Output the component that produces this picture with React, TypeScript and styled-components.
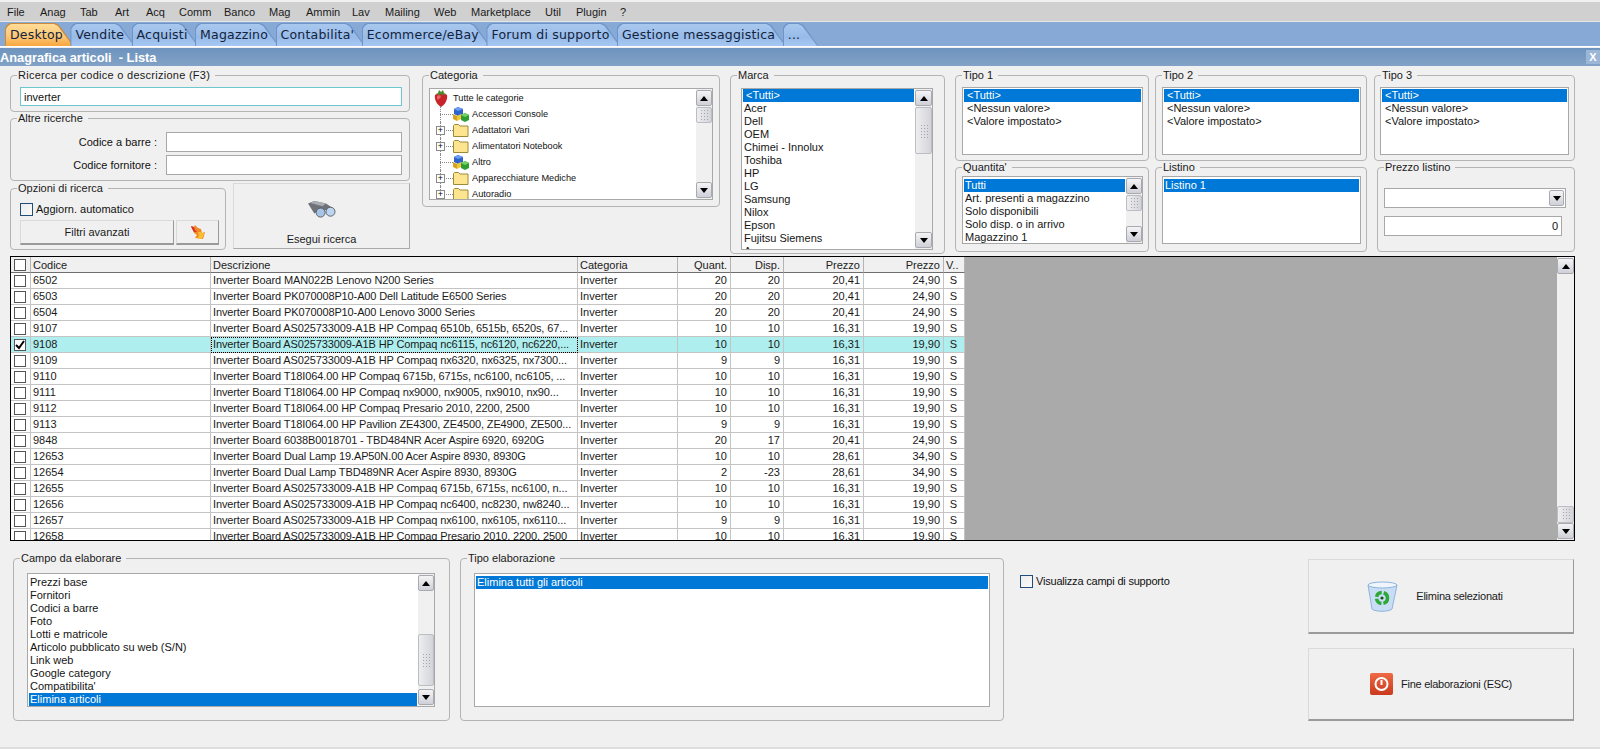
import React from 'react';
import styled, { createGlobalStyle } from 'styled-components';

const GlobalStyle = createGlobalStyle`
  html, body {
    margin: 0;
    padding: 0;
    height: 100%;
    overflow: hidden;
    background: #f0f0f0;
  }
  body {
    font-family: "Liberation Sans", Arial, sans-serif;
    font-size: 11px;
    color: #111;
  }
`;

const Page = styled.div`
  width: 1600px;
  height: 749px;
  display: flex;
  flex-direction: column;
  overflow: hidden;
  padding-top: 2px;
  box-sizing: border-box;
  background: #f0f0f0;
`;

const MenuBar = styled.div`
  height: 19px;
  padding-left: 2px;
  display: flex;
  align-items: center;
  background: #d0d0d0;
  border-bottom: 1px solid #e6e6e6;
`;

const MenuItem = styled.span<{ $w: number }>`
  width: ${({ $w }) => $w}px;
  padding-left: 5px;
  box-sizing: border-box;
  color: #1a1a1a;
`;

const TabStrip = styled.div`
  height: 25px;
  padding: 1px 0 0 5px;
  box-sizing: border-box;
  display: flex;
  align-items: stretch;
  background: #86a9d6;
  border-bottom: 1px solid #fff;
`;

const tabShape =
  'polygon(0 100%, 0 5px, 2px 2px, 5px 0, calc(100% - 19px) 0, calc(100% - 15px) 2px, calc(100% - 12px) 6px, 100% 100%)';

const Tab = styled.div<{ $active?: boolean }>`
  position: relative;
  display: flex;
  align-items: center;
  padding: 0 11px 0 5px;
  margin-right: -3.5px;
  font-family: "DejaVu Sans", Verdana, sans-serif;
  font-size: 12.5px;
  letter-spacing: 0.2px;
  color: #14233c;
  background: ${({ $active }) => ($active ? '#c98a3a' : '#6f95c8')};
  clip-path: ${tabShape};

  &:last-child {
    padding-right: 18px;
  }

  &::before {
    content: '';
    position: absolute;
    inset: 1px 1px 0 1px;
    clip-path: ${tabShape};
    background: ${({ $active }) =>
      $active
        ? 'linear-gradient(#ffdc97, #fcc877 55%, #f8a63f)'
        : 'linear-gradient(#a9c8ee, #97bbe9 60%, #a6c7f2)'};
  }
`;

const TabLabel = styled.span`
  position: relative;
`;

const TitleBar = styled.div`
  height: 18px;
  margin-top: 1px;
  display: flex;
  align-items: center;
  justify-content: space-between;
  background: linear-gradient(#6d93be, #82a2c6);
  color: #fff;
  font-size: 12.8px;
  font-weight: 700;
  white-space: pre;
`;

const CloseBox = styled.div`
  width: 14px;
  height: 14px;
  display: flex;
  align-items: center;
  justify-content: center;
  background: #9bb6d6;
  color: #fff;
  font-size: 11px;
  font-weight: 700;
`;

const Content = styled.div`
  flex: 1;
  min-height: 0;
  padding: 3px 25px 0 10px;
  display: flex;
  flex-direction: column;
`;

const TopArea = styled.div`
  height: 187px;
  display: flex;
  align-items: flex-start;
`;

const LeftColumn = styled.div`
  width: 400px;
  margin-right: 12px;
  display: flex;
  flex-direction: column;
`;

const Group = styled.fieldset<{ $w?: number; $h: number; $top: number; $right: number; $left: number }>`
  --inset: ${({ $left }) => $left}px;
  margin: 0;
  min-width: 0;
  box-sizing: border-box;
  width: ${({ $w }) => ($w ? `${$w}px` : 'auto')};
  height: ${({ $h }) => $h}px;
  padding: ${({ $top, $right, $left }) => `${$top}px ${$right}px 0 ${$left}px`};
  border: 1px solid #b4b4b4;
  border-radius: 4px;
`;

const GroupTitle = styled.legend`
  margin-left: calc(6px - var(--inset));
  padding: 0 5px 0 1px;
  line-height: 12px;
  color: #1a1a1a;
`;

const WideGroupTitle = styled(GroupTitle)`
  letter-spacing: 0.27px;
`;

const TextBox = styled.div<{ $focus?: boolean; $w?: number; $right?: boolean }>`
  box-sizing: border-box;
  height: ${({ $focus }) => ($focus ? 19 : 20)}px;
  width: ${({ $w }) => ($w ? `${$w}px` : 'auto')};
  padding: 0 3px;
  display: flex;
  align-items: center;
  justify-content: ${({ $right }) => ($right ? 'flex-end' : 'flex-start')};
  background: #fff;
  border: 1px solid ${({ $focus }) => ($focus ? '#6cc8cc' : '#a8a8a8')};
`;

const FieldRow = styled.div`
  display: flex;
  align-items: center;
  justify-content: flex-end;
  gap: 9px;
  margin-bottom: 3px;
`;

const SearchRow = styled.div`
  margin-top: 1px;
  display: flex;
  align-items: flex-end;
  justify-content: space-between;
`;

const CheckLine = styled.label`
  display: flex;
  align-items: center;
  gap: 3px;
  height: 14px;
  line-height: 14px;
`;

const Check = styled.span`
  width: 13px;
  height: 13px;
  flex: none;
  box-sizing: border-box;
  display: flex;
  align-items: center;
  justify-content: center;
  border: 1px solid #1f4e79;
  background: linear-gradient(135deg, #ececec, #fafafa);
`;

const CellCheck = styled(Check)`
  width: 12px;
  height: 12px;
  margin: 0 auto;
  border-color: #555;
  background: #fff;
`;

const ButtonRow = styled.div`
  margin-top: 4px;
  display: flex;
  gap: 2px;
`;

const Button = styled.div<{ $w: number; $h: number; $column?: boolean; $gap?: number }>`
  box-sizing: border-box;
  width: ${({ $w }) => $w}px;
  height: ${({ $h }) => $h}px;
  display: flex;
  flex-direction: ${({ $column }) => ($column ? 'column' : 'row')};
  align-items: center;
  justify-content: center;
  gap: ${({ $gap }) => $gap ?? 0}px;
  background: #f0f0f0;
  border: 1px solid #dadada;
  border-right-color: #9a9a9a;
  border-bottom: 2px solid #9a9a9a;
  color: #1a1a1a;
`;

const SearchButton = styled(Button)`
  margin-bottom: 1px;
  padding-top: 16px;
  justify-content: flex-start;
  border-right-color: #aaa;
  border-bottom: 1px solid #aaa;
`;

const BigButton = styled(Button)<{ $shift: number }>`
  margin-right: 1px;
  padding-right: ${({ $shift }) => $shift}px;
  letter-spacing: -0.25px;
`;

const ListBox = styled.div<{ $w?: number; $h: number }>`
  box-sizing: border-box;
  width: ${({ $w }) => ($w ? `${$w}px` : 'auto')};
  height: ${({ $h }) => $h}px;
  display: flex;
  background: #fff;
  border: 1px solid #a8a8a8;
  overflow: hidden;
`;

const ListItems = styled.div<{ $top?: number }>`
  flex: 1;
  min-width: 0;
  padding: ${({ $top }) => $top ?? 1}px 1px 0;
  overflow: hidden;
`;

const ListItem = styled.div<{ $selected?: boolean; $indent?: number }>`
  height: 13px;
  line-height: 13px;
  padding-left: ${({ $indent }) => $indent ?? 1}px;
  white-space: nowrap;
  font-size: 11px;
  background: ${({ $selected }) => ($selected ? '#0078d7' : 'transparent')};
  color: ${({ $selected }) => ($selected ? '#fff' : '#151515')};
`;

const ScrollTrack = styled.div<{ $w?: number }>`
  width: ${({ $w }) => $w ?? 16}px;
  flex: none;
  padding: 1px 0;
  box-sizing: border-box;
  display: flex;
  flex-direction: column;
  background: #f0f0f0;
`;

const ScrollButton = styled.div`
  height: 16px;
  flex: none;
  box-sizing: border-box;
  display: flex;
  align-items: center;
  justify-content: center;
  background: linear-gradient(#f4f4f6, #cfd0d8);
  border: 1px solid #a9aab0;
  border-radius: 2px;
`;

const Arrow = styled.span<{ $down?: boolean }>`
  width: 0;
  height: 0;
  border-left: 4px solid transparent;
  border-right: 4px solid transparent;
  border-${({ $down }) => ($down ? 'top' : 'bottom')}: 5px solid #000;
`;

const ScrollMiddle = styled.div`
  flex: 1;
  min-height: 0;
`;

const ScrollThumb = styled.div<{ $top: number; $h: number }>`
  margin-top: ${({ $top }) => $top}px;
  height: ${({ $h }) => $h}px;
  box-sizing: border-box;
  display: flex;
  align-items: center;
  justify-content: center;
  background: linear-gradient(90deg, #eeeef0, #d3d4da);
  border: 1px solid #bcbdc3;
  border-radius: 2px;
`;

const Grip = styled.div`
  width: 8px;
  height: 14px;
  max-height: 90%;
  background-image: radial-gradient(#a5a6ac 35%, transparent 40%);
  background-size: 3px 3px;
`;

const TreeRow = styled.div`
  height: 16px;
  display: flex;
  align-items: center;
  font-size: 9.2px;
  white-space: nowrap;
`;

const RootIcon = styled.span`
  margin-left: 3px;
  margin-right: 5px;
  display: flex;
`;

const Connector = styled.span<{ $last?: boolean }>`
  position: relative;
  width: 20px;
  height: 16px;
  margin-left: 2px;
  flex: none;

  &::before {
    content: '';
    position: absolute;
    left: 7px;
    top: 0;
    bottom: ${({ $last }) => ($last ? '8px' : '0')};
    border-left: 1px dotted #888;
  }

  &::after {
    content: '';
    position: absolute;
    left: 7px;
    right: 0;
    top: 8px;
    border-top: 1px dotted #888;
  }
`;

const Plus = styled.span`
  position: absolute;
  left: 3px;
  top: 4px;
  z-index: 1;
  width: 9px;
  height: 9px;
  box-sizing: border-box;
  display: flex;
  align-items: center;
  justify-content: center;
  background: #fff;
  border: 1px solid #8a8a8a;
  font-size: 9px;
  line-height: 7px;
  color: #000;
`;

const TreeIcon = styled.span`
  width: 18px;
  flex: none;
  display: flex;
  margin-right: 1px;
`;

const RightBlock = styled.div`
  width: 620px;
  display: flex;
  flex-direction: column;
`;

const RightRow = styled.div<{ $gap: number }>`
  display: flex;
  gap: 6px;

  & > :last-child {
    margin-left: ${({ $gap }) => $gap}px;
  }
`;

const SelectBox = styled(TextBox)`
  padding: 0 1px 0 0;
  justify-content: flex-end;
  margin-bottom: 8px;
`;

const SelectArrow = styled(ScrollButton)`
  width: 15px;
  height: 16px;
`;

const GridFrame = styled.div`
  height: 285px;
  flex: none;
  box-sizing: border-box;
  display: flex;
  background: #aaaaaa;
  border: 1px solid #000;
  overflow: hidden;
`;

const GridArea = styled.div`
  flex: 1;
  min-width: 0;
  overflow: hidden;
`;

const Table = styled.table`
  width: 954px;
  table-layout: fixed;
  border-collapse: separate;
  border-spacing: 0;
  background: #fff;
`;

const HeadCell = styled.th<{ $right?: boolean }>`
  height: 16px;
  padding: 0 3px 0 2px;
  box-sizing: border-box;
  overflow: hidden;
  white-space: nowrap;
  font-weight: 400;
  text-align: ${({ $right }) => ($right ? 'right' : 'left')};
  background: #f0f0f0;
  border-right: 1px solid #b4b4b4;
  border-bottom: 1px solid #6e6e6e;
  color: #222;
`;

const Row = styled.tr<{ $selected?: boolean }>`
  background: ${({ $selected }) => ($selected ? '#aeeeee' : '#fff')};
`;

const Cell = styled.td<{ $right?: boolean; $center?: boolean }>`
  height: 16px;
  padding: 0 3px 0 2px;
  box-sizing: border-box;
  overflow: hidden;
  white-space: nowrap;
  line-height: 15px;
  text-align: ${({ $right, $center }) => ($right ? 'right' : $center ? 'center' : 'left')};
  border-right: 1px solid #c4c4c4;
  border-bottom: 1px solid #c4c4c4;
  color: #1a1a1a;
`;

const DescCell = styled(Cell)<{ $focus?: boolean }>`
  letter-spacing: -0.12px;
  outline: ${({ $focus }) => ($focus ? '1px dotted #000' : 'none')};
  outline-offset: -1px;
`;

const BottomArea = styled.div`
  flex: 1;
  min-height: 0;
  padding: 11px 0 0 3px;
  display: flex;
  align-items: flex-start;
`;

const SupportCheck = styled(CheckLine)`
  margin: 22px 0 0 16px;
  letter-spacing: -0.2px;
`;

const ActionColumn = styled.div`
  margin: 7px 0 0 auto;
  display: flex;
  flex-direction: column;
  gap: 14px;
`;

const GroupGap = styled.div`
  width: 10px;
  flex: none;
`;

const ColGap = styled.div<{ $w: number }>`
  width: ${({ $w }) => $w}px;
  flex: none;
`;

const FooterBand = styled.div`
  height: 2px;
  flex: none;
  background: #dddddd;
`;

const Strawberry = () => (
  <svg width="14" height="17" viewBox="0 0 14 17">
    <path d="M1 5c2-2 10-2 12 0 1 4-2 10-6 12C3 15 0 9 1 5z" fill="#c8252b" />
    <path d="M3 6c1-1 3-1 4 0-1 3-3 4-4 3z" fill="#e8656a" />
    <path d="M2 4l2-1 1-3 2 2 2-2 1 3 2 1-3 1-2-1-2 1z" fill="#4c8a2e" />
  </svg>
);

const Cubes = () => (
  <svg width="16" height="15" viewBox="0 0 16 15">
    <path d="M5 0l5 2v5l-5 2-4-2V2z" fill="#2f63c9" />
    <path d="M5 0l5 2-5 2-4-2z" fill="#6d9cf0" />
    <path d="M0 7l4 2v5l-4-2z" fill="#d9a21c" />
    <path d="M4 9l4-2v5l-4 2z" fill="#f0c63e" />
    <path d="M8 8l4-2 4 2v5l-4 2-4-2z" fill="#2f9e32" />
    <path d="M8 8l4-2 4 2-4 2z" fill="#74d266" />
  </svg>
);

const Folder = () => (
  <svg width="16" height="14" viewBox="0 0 16 14">
    <path d="M.5 13.5V2.5l1-1h4l1.5 1.5h8v10.5z" fill="#fde58f" stroke="#9c8a3a" />
  </svg>
);

const Binoculars = () => (
  <svg width="31" height="18" viewBox="0 0 32 20">
    <path d="M1 4l7-3 13 3 9 6-2 6-7-5-8 1-5 3z" fill="#6f7278" />
    <path d="M3 3l6-2 12 3-4 3z" fill="#a9acb2" />
    <circle cx="15" cy="14" r="5" fill="#a6c4e8" stroke="#55585e" />
    <circle cx="26" cy="13" r="5" fill="#bcd5f0" stroke="#55585e" />
  </svg>
);

const FlameArrow = () => (
  <svg width="16" height="16" viewBox="0 0 16 16">
    <path d="M1 2l3 1 1-2 3 3 3 1 1 4 3-1-2 7-8-1 2-3-3-2-1-3z" fill="#f08a24" />
    <path d="M1 2l3 1 1 3 2 2-3 0-2-3z" fill="#d8352a" />
    <path d="M8 8l3 0 1 1 2 0-2 6-5-1 2-2z" fill="#fcc02e" />
  </svg>
);

const RecycleBin = () => (
  <svg width="31" height="31" viewBox="0 0 31 31">
    <path d="M1 4l4 24c3 3 17 3 20 0L30 4z" fill="#c9def5" stroke="#8eb3dc" />
    <ellipse cx="15.5" cy="4" rx="14.5" ry="3" fill="#eef5fc" stroke="#8eb3dc" />
    <circle cx="15" cy="17" r="5.5" fill="none" stroke="#2fa83a" strokeWidth="3.5" strokeDasharray="7 2" />
    <circle cx="15" cy="17" r="1.6" fill="#14541c" />
  </svg>
);

const PowerIcon = () => (
  <svg width="23" height="22" viewBox="0 0 23 22">
    <defs>
      <linearGradient id="powerFill" x1="0" y1="0" x2="0" y2="1">
        <stop offset="0" stopColor="#ee6a44" />
        <stop offset="1" stopColor="#c93a1e" />
      </linearGradient>
    </defs>
    <rect x="0" y="0" width="23" height="22" rx="2" fill="url(#powerFill)" />
    <circle cx="11.5" cy="11" r="6" fill="none" stroke="#fff" strokeWidth="2" />
    <path d="M11.5 7v5" stroke="#fff" strokeWidth="2" />
  </svg>
);

const Tick = () => (
  <svg width="10" height="10" viewBox="0 0 10 10">
    <path d="M1 5l3 3 5-7" fill="none" stroke="#000" strokeWidth="2" />
  </svg>
);

const Scroll = ({ top, h, w }: { top: number; h: number; w?: number }) => (
  <ScrollTrack $w={w}>
    <ScrollButton><Arrow /></ScrollButton>
    <ScrollMiddle>
      <ScrollThumb $top={top} $h={h}>
        <Grip />
      </ScrollThumb>
    </ScrollMiddle>
    <ScrollButton><Arrow $down /></ScrollButton>
  </ScrollTrack>
);

const menus: [string, number][] = [
  ['File', 33], ['Anag', 40], ['Tab', 35], ['Art', 31], ['Acq', 33], ['Comm', 45], ['Banco', 45],
  ['Mag', 37], ['Ammin', 46], ['Lav', 33], ['Mailing', 49], ['Web', 37], ['Marketplace', 74],
  ['Util', 31], ['Plugin', 44], ['?', 20],
];

const tabs = ['Desktop', 'Vendite', 'Acquisti', 'Magazzino', "Contabilita'", 'Ecommerce/eBay', 'Forum di supporto', 'Gestione messaggistica', '...'];

const treeItems = [
  { label: 'Accessori Console', cubes: true },
  { label: 'Adattatori Vari' },
  { label: 'Alimentatori Notebook' },
  { label: 'Altro', cubes: true },
  { label: 'Apparecchiature Mediche' },
  { label: 'Autoradio' },
];

const brands = ['Acer', 'Dell', 'OEM', 'Chimei - Innolux', 'Toshiba', 'HP', 'LG', 'Samsung', 'Nilox', 'Epson', 'Fujitsu Siemens', 'Asus'];
const typeValues = ['<Tutti>', '<Nessun valore>', '<Valore impostato>'];
const quantities = ['Tutti', 'Art. presenti a magazzino', 'Solo disponibili', 'Solo disp. o in arrivo', 'Magazzino 1'];
const fields = ['Prezzi base', 'Fornitori', 'Codici a barre', 'Foto', 'Lotti e matricole', 'Articolo pubblicato su web (S/N)', 'Link web', 'Google category', "Compatibilita'", 'Elimina articoli'];

const AS = 'Inverter Board AS025733009-A1B HP Compaq ';
const T18 = 'Inverter Board T18I064.00 HP ';

const rows: [string, string, number, number, string, string][] = [
  ['6502', 'Inverter Board MAN022B Lenovo N200 Series', 20, 20, '20,41', '24,90'],
  ['6503', 'Inverter Board PK070008P10-A00 Dell Latitude E6500 Series', 20, 20, '20,41', '24,90'],
  ['6504', 'Inverter Board PK070008P10-A00 Lenovo 3000 Series', 20, 20, '20,41', '24,90'],
  ['9107', AS + '6510b, 6515b, 6520s, 67...', 10, 10, '16,31', '19,90'],
  ['9108', AS + 'nc6115, nc6120, nc6220,...', 10, 10, '16,31', '19,90'],
  ['9109', AS + 'nx6320, nx6325, nx7300...', 9, 9, '16,31', '19,90'],
  ['9110', T18 + 'Compaq 6715b, 6715s, nc6100, nc6105, ...', 10, 10, '16,31', '19,90'],
  ['9111', T18 + 'Compaq nx9000, nx9005, nx9010, nx90...', 10, 10, '16,31', '19,90'],
  ['9112', T18 + 'Compaq Presario 2010, 2200, 2500', 10, 10, '16,31', '19,90'],
  ['9113', T18 + 'Pavilion ZE4300, ZE4500, ZE4900, ZE500...', 9, 9, '16,31', '19,90'],
  ['9848', 'Inverter Board 6038B0018701 - TBD484NR Acer Aspire 6920, 6920G', 20, 17, '20,41', '24,90'],
  ['12653', 'Inverter Board Dual Lamp 19.AP50N.00 Acer Aspire 8930, 8930G', 10, 10, '28,61', '34,90'],
  ['12654', 'Inverter Board Dual Lamp TBD489NR Acer Aspire 8930, 8930G', 2, -23, '28,61', '34,90'],
  ['12655', AS + '6715b, 6715s, nc6100, n...', 10, 10, '16,31', '19,90'],
  ['12656', AS + 'nc6400, nc8230, nw8240...', 10, 10, '16,31', '19,90'],
  ['12657', AS + 'nx6100, nx6105, nx6110...', 9, 9, '16,31', '19,90'],
  ['12658', AS + 'Presario 2010, 2200, 2500', 10, 10, '16,31', '19,90'],
];

const colWidths = [20, 180, 367, 100, 53, 53, 80, 80, 21];

const SimpleList = ({ items, h }: { items: string[]; h: number }) => (
  <ListBox $h={h}>
    <ListItems>
      {items.map((item, i) => (
        <ListItem key={item} $selected={i === 0} $indent={3}>{item}</ListItem>
      ))}
    </ListItems>
  </ListBox>
);

export default function App() {
  return (
    <Page>
      <GlobalStyle />
      <MenuBar>
        {menus.map(([name, w]) => (
          <MenuItem key={name} $w={w}>{name}</MenuItem>
        ))}
      </MenuBar>
      <TabStrip>
        {tabs.map((tab, i) => (
          <Tab key={tab} $active={i === 0}>
            <TabLabel>{tab}</TabLabel>
          </Tab>
        ))}
      </TabStrip>
      <TitleBar>
        {'Anagrafica articoli  - Lista'}
        <CloseBox>X</CloseBox>
      </TitleBar>

      <Content>
        <TopArea>
          <LeftColumn>
            <Group $h={43} $top={6} $right={7} $left={9}>
              <WideGroupTitle>Ricerca per codice o descrizione (F3)</WideGroupTitle>
              <TextBox $focus>inverter</TextBox>
            </Group>
            <Group $h={69} $top={8} $right={7} $left={9}>
              <GroupTitle>Altre ricerche</GroupTitle>
              <FieldRow>
                Codice a barre :
                <TextBox $w={236} />
              </FieldRow>
              <FieldRow>
                Codice fornitore :
                <TextBox $w={236} />
              </FieldRow>
            </Group>
            <SearchRow>
              <Group $w={216} $h={68} $top={8} $right={6} $left={9}>
                <GroupTitle>Opzioni di ricerca</GroupTitle>
                <CheckLine>
                  <Check />
                  Aggiorn. automatico
                </CheckLine>
                <ButtonRow>
                  <Button $w={154} $h={25}>Filtri avanzati</Button>
                  <Button $w={43} $h={25}><FlameArrow /></Button>
                </ButtonRow>
              </Group>
              <SearchButton $w={177} $h={66} $column $gap={15}>
                <Binoculars />
                Esegui ricerca
              </SearchButton>
            </SearchRow>
          </LeftColumn>

          <Group $w={298} $h={138} $top={7} $right={6} $left={6}>
            <GroupTitle>Categoria</GroupTitle>
            <ListBox $h={112}>
              <ListItems>
                <TreeRow>
                  <RootIcon><Strawberry /></RootIcon>
                  Tutte le categorie
                </TreeRow>
                {treeItems.map((item, i) => (
                  <TreeRow key={item.label}>
                    <Connector $last={i === treeItems.length - 1}>
                      {!item.cubes && <Plus>+</Plus>}
                    </Connector>
                    <TreeIcon>{item.cubes ? <Cubes /> : <Folder />}</TreeIcon>
                    {item.label}
                  </TreeRow>
                ))}
              </ListItems>
              <Scroll top={1} h={16} />
            </ListBox>
          </Group>
          <ColGap $w={10} />

          <Group $w={215} $h={185} $top={7} $right={11} $left={10}>
            <GroupTitle>Marca</GroupTitle>
            <ListBox $h={162}>
              <ListItems $top={0}>
                <ListItem $selected $indent={3}>{'<Tutti>'}</ListItem>
                {brands.map(b => (
                  <ListItem key={b}>{b}</ListItem>
                ))}
              </ListItems>
              <Scroll top={1} h={47} w={17} />
            </ListBox>
          </Group>
          <ColGap $w={10} />

          <RightBlock>
            <RightRow $gap={1}>
              <Group $w={194} $h={92} $top={6} $right={5} $left={6}>
                <GroupTitle>Tipo 1</GroupTitle>
                <SimpleList items={typeValues} h={68} />
              </Group>
              <Group $w={212} $h={92} $top={6} $right={5} $left={6}>
                <GroupTitle>Tipo 2</GroupTitle>
                <SimpleList items={typeValues} h={68} />
              </Group>
              <Group $w={201} $h={92} $top={6} $right={5} $left={5}>
                <GroupTitle>Tipo 3</GroupTitle>
                <SimpleList items={typeValues} h={68} />
              </Group>
            </RightRow>
            <RightRow $gap={4}>
              <Group $w={194} $h={91} $top={3} $right={5} $left={6}>
                <GroupTitle>Quantita'</GroupTitle>
                <ListBox $h={68}>
                  <ListItems $top={2}>
                    {quantities.map((q, i) => (
                      <ListItem key={q} $selected={i === 0}>{q}</ListItem>
                    ))}
                  </ListItems>
                  <Scroll top={1} h={16} />
                </ListBox>
              </Group>
              <Group $w={212} $h={91} $top={3} $right={5} $left={6}>
                <GroupTitle>Listino</GroupTitle>
                <ListBox $h={68}>
                  <ListItems $top={2}>
                    <ListItem $selected>Listino 1</ListItem>
                  </ListItems>
                </ListBox>
              </Group>
              <Group $w={198} $h={91} $top={15} $right={0} $left={6}>
                <GroupTitle>Prezzo listino</GroupTitle>
                <SelectBox $w={182}>
                  <SelectArrow><Arrow $down /></SelectArrow>
                </SelectBox>
                <TextBox $w={178} $right>0</TextBox>
              </Group>
            </RightRow>
          </RightBlock>
        </TopArea>

        <GridFrame>
          <GridArea>
            <Table>
              <colgroup>
                {colWidths.map((w, i) => (
                  <col key={i} width={w} />
                ))}
              </colgroup>
              <thead>
                <tr>
                  <HeadCell><CellCheck /></HeadCell>
                  <HeadCell>Codice</HeadCell>
                  <HeadCell>Descrizione</HeadCell>
                  <HeadCell>Categoria</HeadCell>
                  <HeadCell $right>Quant.</HeadCell>
                  <HeadCell $right>Disp.</HeadCell>
                  <HeadCell $right>Prezzo</HeadCell>
                  <HeadCell $right>Prezzo</HeadCell>
                  <HeadCell>V..</HeadCell>
                </tr>
              </thead>
              <tbody>
                {rows.map(([code, desc, qty, disp, cost, price]) => {
                  const selected = code === '9108';
                  return (
                    <Row key={code} $selected={selected}>
                      <Cell><CellCheck>{selected && <Tick />}</CellCheck></Cell>
                      <Cell>{code}</Cell>
                      <DescCell $focus={selected}>{desc}</DescCell>
                      <Cell>Inverter</Cell>
                      <Cell $right>{qty}</Cell>
                      <Cell $right>{disp}</Cell>
                      <Cell $right>{cost}</Cell>
                      <Cell $right>{price}</Cell>
                      <Cell $center>S</Cell>
                    </Row>
                  );
                })}
              </tbody>
            </Table>
          </GridArea>
          <Scroll top={232} h={17} w={17} />
        </GridFrame>

        <BottomArea>
          <Group $w={437} $h={169} $top={9} $right={14} $left={13}>
            <GroupTitle>Campo da elaborare</GroupTitle>
            <ListBox $h={134}>
              <ListItems $top={2}>
                {fields.map((f, i) => (
                  <ListItem key={f} $selected={i === fields.length - 1}>{f}</ListItem>
                ))}
              </ListItems>
              <Scroll top={43} h={52} />
            </ListBox>
          </Group>
          <GroupGap />
          <Group $w={544} $h={169} $top={9} $right={13} $left={13}>
            <GroupTitle>Tipo elaborazione</GroupTitle>
            <ListBox $h={134}>
              <ListItems $top={2}>
                <ListItem $selected>Elimina tutti gli articoli</ListItem>
              </ListItems>
            </ListBox>
          </Group>
          <SupportCheck>
            <Check />
            Visualizza campi di supporto
          </SupportCheck>
          <ActionColumn>
            <BigButton $w={266} $h={75} $gap={18} $shift={12}>
              <RecycleBin />
              Elimina selezionati
            </BigButton>
            <BigButton $w={266} $h={73} $gap={8} $shift={0}>
              <PowerIcon />
              Fine elaborazioni (ESC)
            </BigButton>
          </ActionColumn>
        </BottomArea>
      </Content>
      <FooterBand />
    </Page>
  );
}
